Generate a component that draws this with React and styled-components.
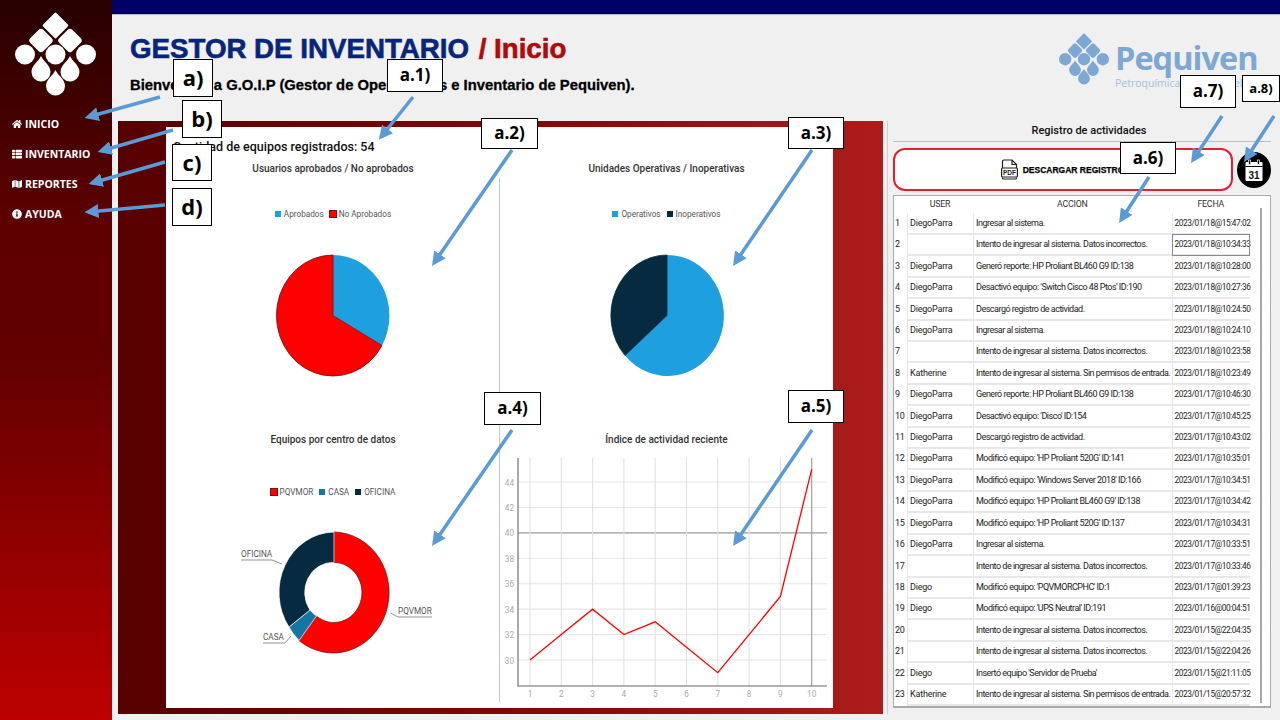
import React from 'react';
import styled, { createGlobalStyle } from 'styled-components';
import { FaHome, FaThList, FaMap, FaInfoCircle } from 'react-icons/fa';

const logs = [
	['DiegoParra', 'Ingresar al sistema.', '2023/01/18@15:47:02'],
	['', 'Intento de ingresar al sistema. Datos incorrectos.', '2023/01/18@10:34:33'],
	['DiegoParra', 'Generó reporte: HP Proliant BL460 G9 ID:138', '2023/01/18@10:28:00'],
	['DiegoParra', "Desactivó equipo: 'Switch Cisco 48 Ptos' ID:190", '2023/01/18@10:27:36'],
	['DiegoParra', 'Descargó registro de actividad.', '2023/01/18@10:24:50'],
	['DiegoParra', 'Ingresar al sistema.', '2023/01/18@10:24:10'],
	['', 'Intento de ingresar al sistema. Datos incorrectos.', '2023/01/18@10:23:58'],
	['Katherine', 'Intento de ingresar al sistema. Sin permisos de entrada.', '2023/01/18@10:23:49'],
	['DiegoParra', 'Generó reporte: HP Proliant BL460 G9 ID:138', '2023/01/17@10:46:30'],
	['DiegoParra', "Desactivó equipo: 'Disco' ID:154", '2023/01/17@10:45:25'],
	['DiegoParra', 'Descargó registro de actividad.', '2023/01/17@10:43:02'],
	['DiegoParra', "Modificó equipo: 'HP Proliant 520G' ID:141", '2023/01/17@10:35:01'],
	['DiegoParra', "Modificó equipo: 'Windows Server 2018' ID:166", '2023/01/17@10:34:51'],
	['DiegoParra', "Modificó equipo: 'HP Proliant BL460 G9' ID:138", '2023/01/17@10:34:42'],
	['DiegoParra', "Modificó equipo: 'HP Proliant 520G' ID:137", '2023/01/17@10:34:31'],
	['DiegoParra', 'Ingresar al sistema.', '2023/01/17@10:33:51'],
	['', 'Intento de ingresar al sistema. Datos incorrectos.', '2023/01/17@10:33:46'],
	['Diego', "Modificó equipo: 'PQVMORCPHC' ID:1", '2023/01/17@01:39:23'],
	['Diego', "Modificó equipo: 'UPS Neutral' ID:191", '2023/01/16@00:04:51'],
	['', 'Intento de ingresar al sistema. Datos incorrectos.', '2023/01/15@22:04:35'],
	['', 'Intento de ingresar al sistema. Datos incorrectos.', '2023/01/15@22:04:26'],
	['Diego', "Insertó equipo 'Servidor de Prueba'", '2023/01/15@21:11:05'],
	['Katherine', 'Intento de ingresar al sistema. Sin permisos de entrada.', '2023/01/15@20:57:32'],
	['', '', ''],
];

const menu = [
	{ label: 'INICIO', icon: <FaHome /> },
	{ label: 'INVENTARIO', icon: <FaThList /> },
	{ label: 'REPORTES', icon: <FaMap /> },
	{ label: 'AYUDA', icon: <FaInfoCircle /> },
];

const notes = [
	{ text: 'a)', x: 173, y: 59, w: 40, h: 38, size: 22 },
	{ text: 'b)', x: 182, y: 100, w: 40, h: 38, size: 22 },
	{ text: 'c)', x: 172, y: 144, w: 40, h: 37, size: 22 },
	{ text: 'd)', x: 172, y: 188, w: 40, h: 38, size: 22 },
	{ text: 'a.1)', x: 387, y: 59, w: 56, h: 33, size: 17 },
	{ text: 'a.2)', x: 481, y: 118, w: 57, h: 31, size: 17 },
	{ text: 'a.3)', x: 788, y: 117, w: 56, h: 32, size: 17 },
	{ text: 'a.4)', x: 484, y: 392, w: 57, h: 33, size: 17 },
	{ text: 'a.5)', x: 788, y: 390, w: 56, h: 33, size: 17 },
	{ text: 'a.6)', x: 1120, y: 142, w: 56, h: 32, size: 17 },
	{ text: 'a.7)', x: 1180, y: 75, w: 56, h: 33, size: 17 },
	{ text: 'a.8)', x: 1242, y: 75, w: 38, h: 27, size: 13 },
];

const arrows = [
	[160, 97, 88, 117], [173, 130, 101, 151], [165, 162, 92, 183], [165, 205, 88, 212],
	[413, 97, 381, 137], [512, 150, 434, 263], [812, 150, 735, 263], [512, 430, 434, 543],
	[812, 430, 735, 543], [1149, 177, 1121, 220], [1222, 116, 1193, 160], [1274, 116, 1246, 159],
];

const activity = [30, 32, 34, 32, 33, 31, 29, 32, 35, 45];

function BrandMark({ color, width }) {
	const drop = (x, y) => `M${x} ${y - 13} C${x + 2} ${y - 8} ${x + 9.5} ${y - 4} ${x + 9.5} ${y + 3} A9.500 9.500 0 0 1 ${x - 9.5} ${y + 3} C${x - 9.5} ${y - 4} ${x - 2} ${y - 8} ${x} ${y - 13}Z`;
	return (
		<svg width={width} viewBox="0 0 81 84" fill={color}>
			<rect x="31" y="4" width="19" height="19" rx="1.500" transform="rotate(45 40.500 13.500)" />
			<rect x="16.750" y="19.250" width="18.500" height="18.500" rx="3.500" transform="rotate(45 26 28.500)" />
			<rect x="45.750" y="19.250" width="18.500" height="18.500" rx="3.500" transform="rotate(45 55 28.500)" />
			<circle cx="10" cy="42.500" r="10" />
			<circle cx="40.500" cy="42.500" r="10" />
			<circle cx="71" cy="42.500" r="10" />
			<path d={drop(26, 57)} />
			<path d={drop(55, 57)} />
			<path d={drop(40.5, 71)} />
		</svg>
	);
}

function PdfIcon() {
	return (
		<svg width="17" height="21" viewBox="0 0 17 21" fill="none" stroke="#222" strokeWidth="1.2">
			<path d="M1.500 9V2.500a1.500 1.500 0 0 1 1.500-1.500h8l4.500 4.500V9" />
			<path d="M11 1v4.500h4.500" />
			<path d="M1.500 18.500v.5a1 1 0 0 0 1 1h12a1 1 0 0 0 1-1v-.5" />
			<rect x="0.600" y="9" width="15.800" height="9" rx="1" fill="#fff" />
			<text x="8.500" y="16" fontSize="6.500" fontWeight="700" fill="#222" stroke="none" textAnchor="middle" fontFamily="Liberation Sans, sans-serif">PDF</text>
		</svg>
	);
}

function CalendarIcon() {
	return (
		<svg width="34" height="36" viewBox="0 0 34 36">
			<ellipse cx="17" cy="18" rx="17" ry="18" fill="#000" />
			<rect x="8.500" y="10" width="17" height="19" rx="1" fill="#fff" />
			<rect x="8.500" y="14" width="17" height="1" fill="#000" />
			<rect x="11.500" y="8" width="2.200" height="4.500" fill="#000" stroke="#fff" strokeWidth="0.700" />
			<rect x="20.300" y="8" width="2.200" height="4.500" fill="#000" stroke="#fff" strokeWidth="0.700" />
			<text x="17" y="26.500" fontSize="10" fontWeight="700" fill="#111" textAnchor="middle" fontFamily="Liberation Sans, sans-serif">31</text>
		</svg>
	);
}

// same pie for the two top charts, first slice starts at 12 o'clock
function PieChart({ end, first, second, outline }) {
	const firstLarge = end[0] < 0 ? 1 : 0;
	return (
		<PieSvg width="122" height="123" viewBox="-61 -61.500 122 123">
			<path d={`M0 0 L0 -60.500 A56.500 60.500 0 ${firstLarge} 1 ${end[0]} ${end[1]}Z`} fill={first} />
			<path d={`M0 0 L${end[0]} ${end[1]} A56.500 60.500 0 ${firstLarge ? 0 : 1} 1 0 -60.500Z`} fill={second} stroke={outline} strokeWidth="0.800" />
		</PieSvg>
	);
}

function DonutChart() {
	return (
		<DonutSvg width="240" height="150" viewBox="0 0 240 150">
			<path d="M120 14 A56 60.500 0 1 1 85 122.500 L102.500 98 A28 30 0 1 0 120 44.500Z" fill="#f00" stroke="#6a1010" strokeWidth="0.700" />
			<path d="M85 122.500 A56 60.500 0 0 1 75 109 L96 92 A28 30 0 0 0 102.500 98Z" fill="#1576a3" stroke="#fff" strokeWidth="0.700" />
			<path d="M75 109 A56 60.500 0 0 1 120 14 L120 44.500 A28 30 0 0 0 96 92Z" fill="#062b40" stroke="#fff" strokeWidth="0.700" />
			<ChartLabel x="27" y="39">OFICINA</ChartLabel>
			<path d="M27 42 H58 L68 46" fill="none" stroke="#777" strokeWidth="0.800" />
			<ChartLabel x="184" y="96">PQVMOR</ChartLabel>
			<path d="M218 99 H184 L176.500 95" fill="none" stroke="#777" strokeWidth="0.800" />
			<ChartLabel x="49" y="122">CASA</ChartLabel>
			<path d="M49 125 H71 L77 118" fill="none" stroke="#777" strokeWidth="0.800" />
		</DonutSvg>
	);
}

function LineChart() {
	const xAt = i => 13 + i * 31.3;
	const yAt = v => 203 - (v - 30) * 12.71;
	const ys = [30, 32, 34, 36, 38, 40, 42, 44];
	return (
		<svg width="340" height="250" viewBox="-16 0 340 250">
			{ys.map(v => (
				<line key={v} x1="1" x2="310" y1={yAt(v)} y2={yAt(v)} stroke={v === 40 ? '#9a9a9a' : '#e6e6e6'} strokeWidth="1.100" />
			))}
			{activity.map((_, i) => (
				<line key={i} x1={xAt(i)} x2={xAt(i)} y1="1" y2="229" stroke={i === 9 ? '#999' : '#e2e2e2'} strokeWidth="1.100" />
			))}
			<path d="M1 1 V229 H310" fill="none" stroke="#666" strokeWidth="1.100" />
			{ys.map(v => <AxisLabel key={v} x="-3" y={yAt(v) + 3.500} textAnchor="end">{v}</AxisLabel>)}
			{activity.map((_, i) => <AxisLabel key={i} x={xAt(i)} y="240" textAnchor="middle">{i + 1}</AxisLabel>)}
			<polyline points={activity.map((v, i) => `${xAt(i)},${yAt(v)}`).join(' ')} fill="none" stroke="#f00" strokeWidth="1.300" />
		</svg>
	);
}

function Legend({ items, $bottom }) {
	return (
		<LegendRow $bottom={$bottom}>
			{items.map(item => (
				<LegendItem key={item.label}>
					<Swatch $color={item.color} $outlined={item.outlined} />
					{item.label}
				</LegendItem>
			))}
		</LegendRow>
	);
}

function App() {
	return (
		<Page>
			<GlobalStyle />
			<Sidebar>
				<SideLogo><BrandMark color="#fff" width={81} /></SideLogo>
				<Menu>
					{menu.map(item => (
						<MenuItem key={item.label}>
							<MenuIcon>{item.icon}</MenuIcon>
							{item.label}
						</MenuItem>
					))}
				</Menu>
			</Sidebar>
			<Main>
				<TopBar />
				<Header>
					<HeaderText>
						<Title>GESTOR DE INVENTARIO <TitlePage>/ Inicio</TitlePage></Title>
						<Welcome>Bienvenido a G.O.I.P (Gestor de Operaciones e Inventario de Pequiven).</Welcome>
					</HeaderText>
					<Brand>
						<BrandMark color="#7ea8d4" width={50} />
						<BrandText>
							<BrandName>Pequiven</BrandName>
							<BrandSub>Petroquímica de Venezuela, S.A.</BrandSub>
						</BrandText>
					</Brand>
				</Header>
				<Content>
					<Panel>
						<Card>
							<Count>Cantidad de equipos registrados: 54</Count>
							<ChartGrid>
								<ChartCell>
									<ChartTitle>Usuarios aprobados / No aprobados</ChartTitle>
									<Legend items={[{ label: 'Aprobados', color: '#1e9fe0' }, { label: 'No Aprobados', color: '#f00', outlined: true }]} />
									<PieChart end={[49, 30]} first="#1e9fe0" second="#f00" outline="#6a1010" />
								</ChartCell>
								<ChartCell>
									<ChartTitle>Unidades Operativas / Inoperativas</ChartTitle>
									<Legend items={[{ label: 'Operativos', color: '#1e9fe0' }, { label: 'Inoperativos', color: '#062b40' }]} />
									<PieChart end={[-42, 40]} first="#1e9fe0" second="#062b40" outline="#062b40" />
								</ChartCell>
								<ChartCell>
									<ChartTitle>Equipos por centro de datos</ChartTitle>
									<Legend $bottom items={[{ label: 'PQVMOR', color: '#f00', outlined: true }, { label: 'CASA', color: '#1576a3' }, { label: 'OFICINA', color: '#062b40' }]} />
									<DonutChart />
								</ChartCell>
								<ChartCell>
									<ChartTitle>Índice de actividad reciente</ChartTitle>
									<LinePlot><LineChart /></LinePlot>
								</ChartCell>
							</ChartGrid>
						</Card>
					</Panel>
					<LogColumn>
						<LogTitle>Registro de actividades</LogTitle>
						<Actions>
							<DownloadButton><PdfIcon />DESCARGAR REGISTRO</DownloadButton>
							<CalendarButton><CalendarIcon /></CalendarButton>
						</Actions>
						<TableBox>
							<LogTable>
								<HeadRow>
									<span />
									<span>USER</span>
									<span>ACCION</span>
									<span>FECHA</span>
								</HeadRow>
								{logs.map((log, i) => (
									<LogRow key={i}>
										<RowNumber>{log[2] ? i + 1 : ''}</RowNumber>
										<UserCell>{log[0]}</UserCell>
										<LogCell>{log[1]}</LogCell>
										<DateCell $selected={i === 1}>{log[2]}</DateCell>
									</LogRow>
								))}
							</LogTable>
							<ScrollTrack><ScrollThumb /></ScrollTrack>
						</TableBox>
					</LogColumn>
				</Content>
			</Main>
			<ArrowLayer width="1280" height="720" viewBox="0 0 1280 720">
				<defs>
					<marker id="head" markerWidth="4" markerHeight="4" refX="3" refY="2" orient="auto">
						<path d="M0 0 L4 2 L0 4Z" fill="#5b9bd5" />
					</marker>
				</defs>
				{arrows.map((a, i) => (
					<line key={i} x1={a[0]} y1={a[1]} x2={a[2]} y2={a[3]} stroke="#5b9bd5" strokeWidth="3.500" markerEnd="url(#head)" />
				))}
			</ArrowLayer>
			{notes.map(note => (
				<Note key={note.text} $x={note.x} $y={note.y} $w={note.w} $h={note.h} $size={note.size}>{note.text}</Note>
			))}
		</Page>
	);
}

const GlobalStyle = createGlobalStyle`
	html, body {
		margin: 0;
		padding: 0;
		background: #f0f0f0;
		font-family: "Liberation Sans", sans-serif;
	}
	* {
		box-sizing: border-box;
	}
`;

const Page = styled.div`
	position: relative;
	display: flex;
	width: 1280px;
	height: 720px;
	overflow: hidden;
`;

const Sidebar = styled.aside`
	width: 112px;
	flex-shrink: 0;
	background: linear-gradient(180deg, #280000 0%, #5f0000 32%, #620000 50%, #bd0000 100%);
`;

const SideLogo = styled.div`
	padding: 12px 0 0 15px;
	height: 109px;
`;

const Menu = styled.nav`
	display: flex;
	flex-direction: column;
`;

const MenuItem = styled.a`
	display: flex;
	align-items: center;
	gap: 3px;
	height: 30px;
	padding-left: 12px;
	color: #fff;
	font: 700 10.500px "Open Sans", sans-serif;
`;

const MenuIcon = styled.span`
	display: flex;
	font-size: 10px;
`;

const Main = styled.main`
	flex: 1;
	display: flex;
	flex-direction: column;
	min-width: 0;
`;

const TopBar = styled.div`
	height: 15px;
	background: #000066;
	border-bottom: 1px solid #b8b8d0;
`;

const Header = styled.header`
	height: 106px;
	display: flex;
	justify-content: space-between;
	align-items: flex-start;
	padding: 18px 22px 0 18px;
`;

const HeaderText = styled.div`
	display: flex;
	flex-direction: column;
	gap: 12px;
`;

const Title = styled.h1`
	margin: 0;
	color: #05267c;
	font: 700 27.700px/32px "Liberation Sans", sans-serif;
	-webkit-text-stroke: 0.6px #05267c;
`;

const TitlePage = styled.span`
	margin-left: 2px;
	color: #b00a0a;
	-webkit-text-stroke: 0.6px #b00a0a;
`;

const Welcome = styled.p`
	margin: 0;
	color: #000;
	font: 700 14.800px/17px "Liberation Sans", sans-serif;
	-webkit-text-stroke: 0.3px #000;
`;

const Brand = styled.div`
	display: flex;
	align-items: flex-start;
	gap: 6px;
`;

const BrandText = styled.div`
	display: flex;
	flex-direction: column;
	width: 143px;
	padding-top: 7px;
`;

const BrandName = styled.span`
	color: #7ea8d4;
	font: 700 32.500px/36px "Open Sans", sans-serif;
	letter-spacing: -1px;
`;

const BrandSub = styled.span`
	color: #a2c0e0;
	font: 400 10.500px/14px "Open Sans", sans-serif;
	white-space: nowrap;
`;

const Content = styled.div`
	flex: 1;
	display: flex;
	min-height: 0;
	padding: 0 10px 6px 6px;
	gap: 4px;
`;

const Panel = styled.section`
	width: 765px;
	padding: 6px 50px 6px 48px;
	background: linear-gradient(90deg, #560000 0%, #8a0808 60%, #ad1c1c 100%);
`;

const Card = styled.div`
	height: 100%;
	display: flex;
	flex-direction: column;
	background: #fff;
`;

const Count = styled.div`
	height: 28px;
	padding: 12px 0 0 7px;
	color: #111;
	font: 500 12.500px/16px Roboto, sans-serif;
`;

const ChartGrid = styled.div`
	position: relative;
	flex: 1;
	display: grid;
	grid-template-columns: 334px 333px;
	grid-template-rows: 271px 1fr;
	&::after {
		content: "";
		position: absolute;
		left: 333px;
		top: 23px;
		bottom: 9px;
		width: 1px;
		background: #c8c8c8;
	}
`;

const ChartCell = styled.div`
	display: flex;
	flex-direction: column;
	align-items: center;
	padding-top: 7px;
`;

const ChartTitle = styled.h3`
	margin: 0;
	color: #333;
	font: 500 10px/14px Roboto, sans-serif;
	text-align: center;
`;

const LegendRow = styled.div`
	display: flex;
	gap: 6px;
	margin-top: ${props => (props.$bottom ? '39px' : '32px')};
	height: 12px;
	justify-content: center;
`;

const LegendItem = styled.span`
	display: flex;
	align-items: center;
	gap: 3px;
	color: #555;
	font: 400 8.200px/12px Roboto, sans-serif;
`;

const Swatch = styled.i`
	width: 6px;
	height: 6px;
	background: ${props => props.$color};
	outline: ${props => (props.$outlined ? '1px solid #7a1010' : 'none')};
`;

const PieSvg = styled.svg`
	margin-top: 34px;
`;

const DonutSvg = styled.svg`
	margin-top: 20px;
	margin-left: 2px;
`;

const ChartLabel = styled.text`
	fill: #555;
	font: 400 8.200px Roboto, sans-serif;
`;

const AxisLabel = styled.text`
	fill: #aaa;
	font: 400 8.200px Roboto, sans-serif;
`;

const LinePlot = styled.div`
	align-self: flex-start;
	margin: 9.500px 0 0 1px;
`;

const LogColumn = styled.aside`
	flex: 1;
	display: flex;
	flex-direction: column;
	padding-left: 5px;
	border-left: 1px solid #cfcfcf;
`;

const LogTitle = styled.h2`
	height: 21px;
	margin: 0;
	padding-left: 14px;
	border-bottom: 1px solid #bdbdbd;
	color: #111;
	font: 500 11px/19px Roboto, sans-serif;
	text-align: center;
`;

const Actions = styled.div`
	display: flex;
	align-items: center;
	gap: 4px;
	margin: 6px 0 4px;
`;

const DownloadButton = styled.button`
	width: 340px;
	height: 43px;
	display: flex;
	align-items: center;
	justify-content: center;
	gap: 5px;
	padding-left: 5px;
	background: #fff;
	border: 2px solid #e0202c;
	border-radius: 12px;
	color: #000;
	font: 700 8.500px "Liberation Sans", sans-serif;
	-webkit-text-stroke: 0.25px #000;
`;

const CalendarButton = styled.div`
	display: flex;
`;

const TableBox = styled.div`
	flex: 1;
	display: flex;
	min-height: 0;
	margin-bottom: 6px;
	overflow: hidden;
	background: #fff;
	border: 1px solid #a9a9b3;
	border-bottom-width: 2px;
`;

const LogTable = styled.div`
	width: 357px;
	flex-shrink: 0;
	overflow: hidden;
	background: #fff;
`;

const HeadRow = styled.div`
	display: grid;
	grid-template-columns: 13px 66px 198.500px 78.500px;
	height: 17px;
	color: #333;
	font: 400 8.800px/17px Roboto, sans-serif;
	letter-spacing: -0.2px;
	text-align: center;
`;

const LogRow = styled.div`
	display: grid;
	grid-template-columns: 13px 66px 198.500px 78.500px;
	height: 21.410px;
	color: #222;
	font: 400 9px/20px Roboto, sans-serif;
	letter-spacing: -0.5px;
	white-space: nowrap;
`;

const RowNumber = styled.span`
	padding-left: 1px;
	background: #fff;
	letter-spacing: -0.2px;
`;

const LogCell = styled.span`
	padding-left: 2px;
	border-left: 1px solid #e8e8e8;
	border-bottom: 2px solid #e8e8e8;
`;

const UserCell = styled(LogCell)`
	letter-spacing: -0.2px;
`;

const DateCell = styled(LogCell)`
	font-size: 8.300px;
	letter-spacing: -0.4px;
	outline: ${props => (props.$selected ? '1px solid #8a8a8a' : 'none')};
	outline-offset: -1px;
`;

const ScrollTrack = styled.div`
	flex: 1;
	display: flex;
	justify-content: center;
	padding: 12px 0 3px;
`;

const ScrollThumb = styled.div`
	width: 2px;
	background: #a8a8a8;
`;

const ArrowLayer = styled.svg`
	position: absolute;
	inset: 0;
	pointer-events: none;
`;

const Note = styled.div`
	position: absolute;
	left: ${props => props.$x}px;
	top: ${props => props.$y}px;
	width: ${props => props.$w}px;
	height: ${props => props.$h}px;
	display: flex;
	align-items: center;
	justify-content: center;
	padding-bottom: 2px;
	background: #fff;
	border: 1px solid #000;
	color: #000;
	font: 700 ${props => props.$size}px "Open Sans", sans-serif;
`;

export default App;
